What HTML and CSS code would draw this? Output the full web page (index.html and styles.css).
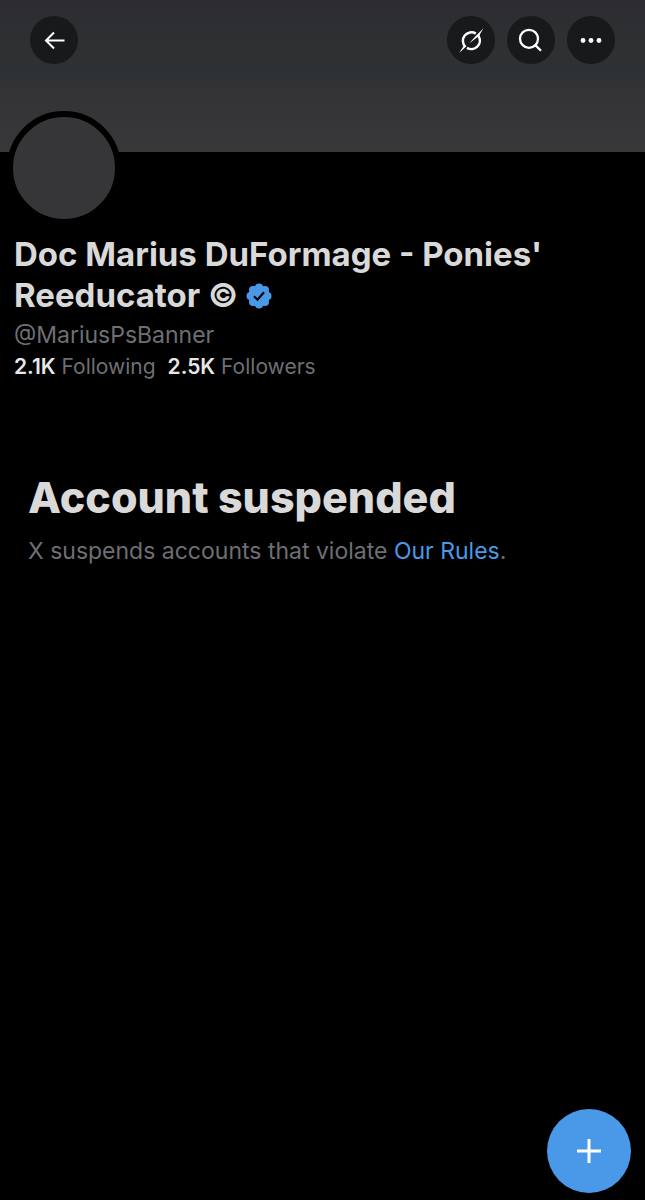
FILE: index.html
```html
<!DOCTYPE html>
<html lang="en">
<head>
<meta charset="utf-8">
<meta name="viewport" content="width=device-width, initial-scale=1">
<title>Doc Marius DuFormage (@MariusPsBanner)</title>
<link rel="stylesheet" href="styles.css">
</head>
<body>
<header class="banner">
  <button class="round" type="button" aria-label="Back">
    <svg width="48" height="48" viewBox="0 0 48 48" fill="none" stroke="#fff" stroke-width="2"><path d="M34.500 24.500H16.500M24 16.500L16 24.500L24 32.500"/></svg>
  </button>
  <nav class="actions" aria-label="Profile actions">
    <button class="round" type="button" aria-label="Grok">
      <svg width="48" height="48" viewBox="0 0 48 48"><path d="M18.300 30.800A8.500 8.500 0 0 1 28.800 17.600M31.800 20.500A8.500 8.500 0 0 1 20 31.900" fill="none" stroke="#fff" stroke-width="2.500"/><path d="M22 27.600L28.500 20.200L36.500 12.200L32.800 18.500L32.800 21.500L31 20.800ZM12 37L17.300 29L19.500 30.300Z" fill="#fff"/></svg>
    </button>
    <button class="round" type="button" aria-label="Search">
      <svg width="48" height="48" viewBox="0 0 48 48" fill="none" stroke="#fff" stroke-width="2.300"><circle cx="22" cy="22.800" r="9"/><path d="M28.300 29.100L34 34.800"/></svg>
    </button>
    <button class="round" type="button" aria-label="More">
      <svg width="48" height="48" viewBox="0 0 48 48" fill="#fff"><circle cx="16" cy="24.500" r="2.400"/><circle cx="24" cy="24.500" r="2.400"/><circle cx="32" cy="24.500" r="2.400"/></svg>
    </button>
  </nav>
</header>
<main>
  <section class="profile">
    <div class="avatar" role="img" aria-label="Profile picture"></div>
    <h1 class="name">Doc Marius DuFormage - Ponies' Reeducator ©
      <svg class="badge" role="img" aria-label="Verified" width="26" height="26" viewBox="0 0 26 26"><g fill="#4a99e9"><circle cx="13" cy="13" r="10.500"/><circle cx="13" cy="4.500" r="4"/><circle cx="19" cy="7" r="4"/><circle cx="21.500" cy="13" r="4"/><circle cx="19" cy="19" r="4"/><circle cx="13" cy="21.500" r="4"/><circle cx="7" cy="19" r="4"/><circle cx="4.500" cy="13" r="4"/><circle cx="7" cy="7" r="4"/></g><path d="M8 13.200L11.500 16.700L18 9.200" fill="none" stroke="#000" stroke-width="2.200"/></svg>
    </h1>
    <p class="handle">@MariusPsBanner</p>
    <p class="stats"><span><b>2.1K</b> Following</span><span><b>2.5K</b> Followers</span></p>
  </section>
  <section class="notice">
    <h2 class="title">Account suspended</h2>
    <p class="reason">X suspends accounts that violate <a class="link" href="#rules">Our Rules</a>.</p>
  </section>
</main>
<button class="compose" type="button" aria-label="New post">
  <svg width="26" height="26" viewBox="0 0 26 26" fill="none" stroke="#fff" stroke-width="3"><path d="M13 1V25M1 13H25"/></svg>
</button>
</body>
</html>
```

FILE: styles.css
```css
* {
  box-sizing: border-box;
}

body {
  margin: 0;
  min-height: 100vh;
  background: #000;
  color: #d9d9d9;
  font-family: Inter, "Liberation Sans", sans-serif;
}

h1, h2, p {
  margin: 0;
}

button {
  padding: 0;
  border: 0;
  border-radius: 50%;
  cursor: pointer;
}

svg {
  display: block;
}

.banner {
  display: flex;
  justify-content: space-between;
  align-items: flex-start;
  height: 152px;
  padding: 16px 30px;
  background: linear-gradient(#2d2d31, #2e3032 32%, #2e3235 48%, #333336 60%, #38383b);
}

.actions {
  display: flex;
  gap: 12px;
}

.round {
  width: 48px;
  height: 48px;
  background: #18191b;
}

.profile {
  padding: 0 14px;
}

.avatar {
  width: 114px;
  height: 114px;
  margin: -41px 0 0 -7px;
  border: 6px solid #000;
  border-radius: 50%;
  background: #363639;
}

.name {
  margin-top: 9px;
  font-size: 33px;
  font-weight: 700;
  line-height: 41px;
}

.badge {
  display: inline-block;
  vertical-align: -2px;
}

.handle {
  margin-top: 3px;
  color: #6e6f74;
  font-size: 23px;
  line-height: 32px;
}

.stats {
  display: flex;
  gap: 12px;
  color: #6e6f74;
  font-size: 21px;
  line-height: 32px;
}

.stats b {
  color: #e7e7e7;
  font-weight: 600;
}

.notice {
  padding: 86px 28px 0;
}

.title {
  font-size: 43px;
  font-weight: 800;
  line-height: 56px;
}

.reason {
  margin-top: 10px;
  color: #6e6f74;
  font-size: 23px;
  line-height: 32px;
}

.link {
  color: #4a99e9;
  text-decoration: none;
}

.compose {
  position: fixed;
  right: 14px;
  bottom: 7px;
  display: grid;
  place-items: center;
  width: 84px;
  height: 84px;
  background: #4a99e9;
}
```
